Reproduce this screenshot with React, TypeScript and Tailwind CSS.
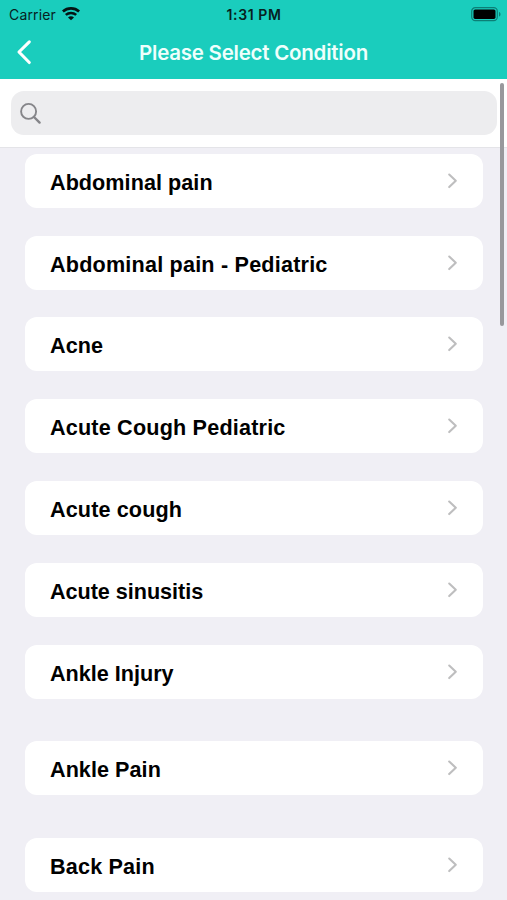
const conditions = [
  { name: "Abdominal pain", gap: "mb-[27.8px]", tracking: "tracking-[0.05px]" },
  { name: "Abdominal pain - Pediatric", gap: "mb-[27.8px]", tracking: "tracking-[0.2px]" },
  { name: "Acne", gap: "mb-[27.8px]", tracking: "tracking-[0.05px]" },
  { name: "Acute Cough Pediatric", gap: "mb-[27.8px]", tracking: "tracking-[0.19px]" },
  { name: "Acute cough", gap: "mb-[27.8px]", tracking: "tracking-[0.12px]" },
  { name: "Acute sinusitis", gap: "mb-[27.8px]", tracking: "tracking-[-0.03px]" },
  { name: "Ankle Injury", gap: "mb-[42.6px]", tracking: "tracking-normal" },
  { name: "Ankle Pain", gap: "mb-[42.6px]", tracking: "tracking-[0.05px]" },
  { name: "Back Pain", gap: "mb-[42.6px]", tracking: "tracking-[0.18px]" },
];

function Wifi() {
  return (
    <svg width="18" height="14" viewBox="0 0 18 14" fill="none" stroke="#041514">
      <path d="M0.9 4.6C5.5 .4 12.5 .4 17.1 4.6" strokeWidth="2.7" />
      <path d="M3.8 7.9C6.8 5.2 11.2 5.2 14.2 7.9" strokeWidth="2.5" />
      <path d="M9 13.3L6 10.4C7.7 8.9 10.3 8.9 12 10.4Z" fill="#041514" stroke="none" />
    </svg>
  );
}

function Battery() {
  return (
    <svg width="31" height="15" viewBox="0 0 31 15" fill="none">
      <rect x="0.7" y="0.7" width="25.6" height="13" rx="3.6" stroke="#0c7f76" strokeWidth="1.2" />
      <rect x="2.5" y="2.5" width="22" height="9.4" rx="1.6" fill="#000" />
      <path d="M28 4.9C30 5.6 30 8.8 28 9.5Z" fill="#0c7f76" />
    </svg>
  );
}

function StatusBar() {
  return (
    <div className="grid h-[27px] grid-cols-[1fr_auto_1fr] items-center pr-[5px] pl-[6px] text-[#07211f]">
      <div className="flex items-center gap-[6px] pl-[3px]">
        <span className="text-[14px] leading-[27px] tracking-[0.15px]">Carrier</span>
        <div className="-mt-px">
          <Wifi />
        </div>
      </div>
      <span className="pt-px text-[14px] leading-[27px] font-semibold tracking-[0.6px]">1:31 PM</span>
      <div className="flex justify-end">
        <Battery />
      </div>
    </div>
  );
}

export default function App() {
  return (
    <div className="relative flex h-[900px] w-full flex-col overflow-hidden bg-[#f0eff5] font-['Inter','Liberation_Sans',sans-serif]">
      <header className="h-[79px] shrink-0 bg-[#1acdbd]">
        <StatusBar />
        <div className="grid h-[50px] grid-cols-[1fr_auto_1fr] items-center">
          <button className="pl-[16px]" aria-label="Back">
            <svg width="17" height="26" viewBox="0 0 17 26" fill="none" stroke="#fff" strokeWidth="3.1" strokeLinecap="round" strokeLinejoin="round">
              <path d="M13.3 2.8L3 13L13.3 23.5" />
            </svg>
          </button>
          <h1 className="pt-[2px] text-[20.5px] font-semibold tracking-[-0.24px] whitespace-nowrap text-[#effffc]">Please Select Condition</h1>
        </div>
      </header>
      <div className="h-[69px] shrink-0 border-b border-[#e4e4e8] bg-white pt-[12px] pr-[10px] pl-[11px]">
        <div className="flex h-[44px] items-center rounded-[13px] bg-[#ededef] pl-[9px]">
          <svg width="22" height="23" viewBox="0 0 22 23" fill="none" stroke="#858589" strokeWidth="1.9" strokeLinecap="round">
            <circle cx="8.6" cy="9.4" r="7.5" />
            <path d="M14 15L19.6 20.6" strokeWidth="2.4" />
          </svg>
        </div>
      </div>
      <main className="flex flex-col pt-[5.8px] pr-[24.3px] pl-[25.2px]">
        {conditions.map(({ name, gap, tracking }) => (
          <div key={name} className={`flex h-[54px] shrink-0 items-center justify-between rounded-[12px] bg-white pr-[24px] pl-[24.8px] ${gap}`}>
            <span className={`pt-[4px] font-['Liberation_Sans',sans-serif] text-[21.6px] leading-[30px] font-bold text-black ${tracking}`}>{name}</span>
            <svg width="12" height="18" viewBox="0 0 12 18" fill="none" stroke="#bebebf" strokeWidth="2.1" strokeLinecap="round" strokeLinejoin="round">
              <path d="M2.2 2.5L8.8 8.7L2.2 15.1" />
            </svg>
          </div>
        ))}
      </main>
      <div className="absolute top-[83px] right-[3.5px] h-[243px] w-[4px] rounded-full bg-[#98989c]" />
    </div>
  );
}
